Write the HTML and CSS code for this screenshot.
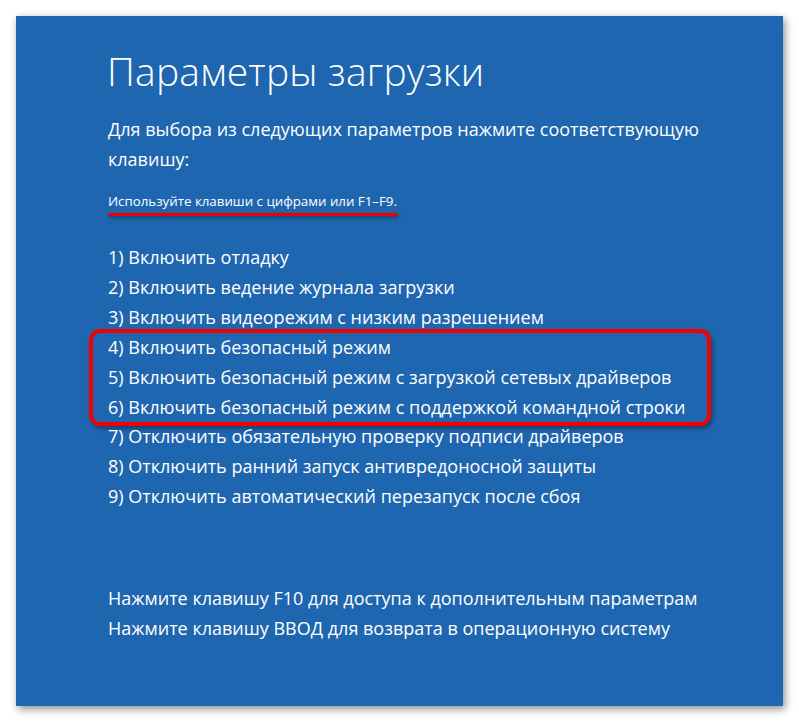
FILE: index.html
```html
<!DOCTYPE html>
<html lang="ru">
<head>
<meta charset="utf-8">
<link rel="stylesheet" href="styles.css">
</head>
<body>
<div class="panel">
  <h1 class="title">Параметры загрузки</h1>
  <p class="intro">Для выбора из следующих параметров нажмите соответствующую клавишу:</p>
  <p class="hint">Используйте клавиши с цифрами или F1–F9.</p>
  <div class="underline"></div>
  <ul class="options">
    <li>1) Включить отладку</li>
    <li>2) Включить ведение журнала загрузки</li>
    <li>3) Включить видеорежим с низким разрешением</li>
    <li class="mark">
      <ul class="marked">
        <li>4) Включить безопасный режим</li>
        <li>5) Включить безопасный режим с загрузкой сетевых драйверов</li>
        <li>6) Включить безопасный режим с поддержкой командной строки</li>
      </ul>
    </li>
    <li>7) Отключить обязательную проверку подписи драйверов</li>
    <li>8) Отключить ранний запуск антивредоносной защиты</li>
    <li>9) Отключить автоматический перезапуск после сбоя</li>
  </ul>
  <div class="footer">
    <p>Нажмите клавишу F10 для доступа к дополнительным параметрам</p>
    <p>Нажмите клавишу ВВОД для возврата в операционную систему</p>
  </div>
</div>
</body>
</html>
```
FILE: styles.css
```css
html, body {
  margin: 0;
  padding: 0;
  background: #ffffff;
}
body {
  width: 799px;
  height: 722px;
  overflow: hidden;
  font-family: "Open Sans", "Noto Sans", sans-serif;
  color: #ffffff;
}
.panel {
  box-sizing: border-box;
  margin: 16px 0 0 16px;
  width: 767px;
  height: 690px;
  background: #1f66b0;
  box-shadow: 2px 3px 8px rgba(0, 0, 0, 0.45);
  padding: 32px 0 0 91px;
}
.title {
  margin: 0;
  font-size: 39px;
  font-weight: 300;
  line-height: 46px;
  letter-spacing: 0.2px;
}
.intro {
  margin: 20px 0 0 1px;
  width: 620px;
  font-size: 18px;
  line-height: 30px;
}
.hint {
  margin: 18px 0 0 1px;
  font-size: 13.3px;
  line-height: 18px;
}
.underline {
  margin: 3px 0 0 1px;
  width: 290px;
  height: 3px;
  border-radius: 2px;
  background: #f20000;
  box-shadow: 1px 2px 3px rgba(0, 0, 0, 0.35);
}
.options, .marked {
  list-style: none;
  margin: 0;
  padding: 0;
}
.options {
  margin: 27px 0 0 1px;
  font-size: 18px;
  line-height: 29.9px;
}
.mark {
  width: fit-content;
  margin: -4px 0 -4px -19px;
  padding: 0 22px 0 15px;
  border: 4px solid #f20000;
  border-radius: 11px;
  box-shadow: 2px 3px 4px rgba(0, 0, 0, 0.35);
}
.footer {
  margin: 71px 0 0 1px;
  font-size: 18px;
  line-height: 30px;
}
.footer p {
  margin: 0;
}
```
